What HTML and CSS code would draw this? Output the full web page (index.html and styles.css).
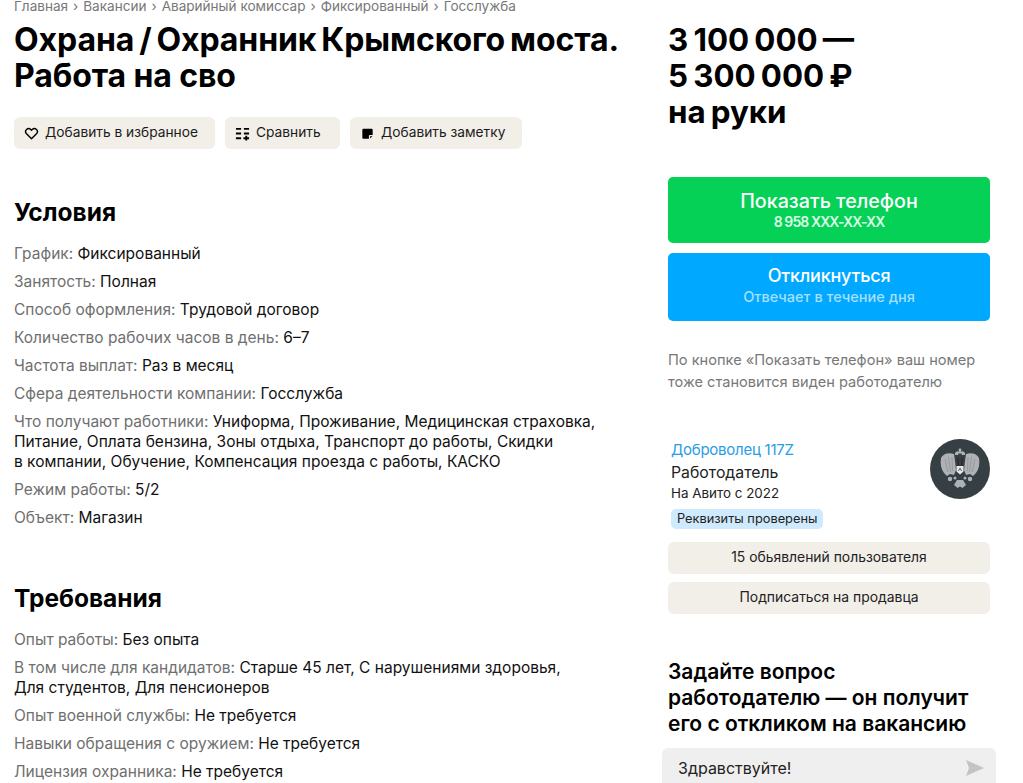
FILE: index.html
```html
<!DOCTYPE html>
<html lang="ru">
<head>
<meta charset="utf-8">
<title>Охрана / Охранник Крымского моста</title>
<link rel="stylesheet" href="styles.css">
</head>
<body>
<div class="page">
  <main class="main">
    <nav class="crumbs">
      <span>Главная</span><i>›</i><span>Вакансии</span><i>›</i><span>Аварийный комиссар</span><i>›</i><span>Фиксированный</span><i>›</i><span>Госслужба</span>
    </nav>
    <h1 class="title">Охрана / Охранник Крымского моста.<br><span class="title-second">Работа на сво</span></h1>
    <div class="actions">
      <button class="chip chip-fav">
        <svg class="ico" viewBox="0 0 16 16"><path d="M8 13.600 2.700 8.300a3.200 3.200 0 0 1 0-4.500 3.200 3.200 0 0 1 4.500 0l.8.8.8-.8a3.200 3.200 0 0 1 4.500 0 3.200 3.200 0 0 1 0 4.500z" fill="none" stroke="#000" stroke-width="1.500" stroke-linejoin="round"/></svg>
        Добавить в избранное
      </button>
      <button class="chip chip-cmp">
        <svg class="ico" viewBox="0 0 16 16"><path d="M1 3h5.500M9.500 3H15M1 8h5.500M9.500 8H15M1 13h5.500M9 13h6M12 10.500v5" fill="none" stroke="#000" stroke-width="2"/></svg>
        Сравнить
      </button>
      <button class="chip chip-note">
        <svg class="ico" viewBox="0 0 16 16"><path d="M3.500 3h9a1 1 0 0 1 1 1v5.500h-3a1 1 0 0 0-1 1v3h-6a1 1 0 0 1-1-1V4a1 1 0 0 1 1-1zM10.800 13.300v-2.500h2.500z" fill="#000"/></svg>
        Добавить заметку
      </button>
    </div>

    <section class="block">
      <h2 class="heading">Условия</h2>
      <ul class="facts">
        <li><span>График:</span> Фиксированный</li>
        <li><span>Занятость:</span> Полная</li>
        <li><span>Способ оформления:</span> Трудовой договор</li>
        <li><span>Количество рабочих часов в день:</span> 6–7</li>
        <li><span>Частота выплат:</span> Раз в месяц</li>
        <li><span>Сфера деятельности компании:</span> Госслужба</li>
        <li><span>Что получают работники:</span> Униформа, Проживание, Медицинская страховка,<br>Питание, Оплата бензина, Зоны отдыха, Транспорт до работы, Скидки<br>в компании, Обучение, Компенсация проезда с работы, КАСКО</li>
        <li><span>Режим работы:</span> 5/2</li>
        <li><span>Объект:</span> Магазин</li>
      </ul>
    </section>

    <section class="block block-req">
      <h2 class="heading">Требования</h2>
      <ul class="facts">
        <li><span>Опыт работы:</span> Без опыта</li>
        <li><span>В том числе для кандидатов:</span> Старше 45 лет, С нарушениями здоровья,<br>Для студентов, Для пенсионеров</li>
        <li><span>Опыт военной службы:</span> Не требуется</li>
        <li><span>Навыки обращения с оружием:</span> Не требуется</li>
        <li><span>Лицензия охранника:</span> Не требуется</li>
      </ul>
    </section>
  </main>

  <aside class="side">
    <div class="price">3 100 000 —<br>5 300 000 ₽<br>на руки</div>
    <a class="cta cta-green"><b>Показать телефон</b><small>8 958 ХХХ-ХХ-ХХ</small></a>
    <a class="cta cta-blue"><b>Откликнуться</b><small>Отвечает в течение дня</small></a>
    <p class="note">По кнопке «Показать телефон» ваш номер<br>тоже становится виден работодателю</p>

    <div class="seller">
      <div class="seller-info">
        <a class="seller-name">Доброволец 117Z</a>
        <div class="seller-role">Работодатель</div>
        <div class="seller-since">На Авито с 2022</div>
        <span class="badge">Реквизиты проверены</span>
      </div>
      <div class="avatar">
        <svg viewBox="0 0 60 60" width="60" height="60">
          <circle cx="30" cy="30" r="30" fill="#363f44"/>
          <g fill="#aeb2b4">
            <path d="M24 15c-6-2-11 0-13 4-1 6 0 11 3 15l3 3 3-2 4 1 2-5-1-9z"/>
            <path d="M36 15c6-2 11 0 13 4 1 6 0 11-3 15l-3 3-3-2-4 1-2-5 1-9z"/>
            <path d="M30 9l1.500 1.500-.5 2 1.500 2h-5l1.500-2-.5-2z"/>
            <path d="M25 14c1.500-2 3-2 4-1l-1 3h-3zM35 14c-1.500-2-3-2-4-1l1 3h3z"/>
            <circle cx="20" cy="40" r="2.200"/><circle cx="40" cy="40" r="2.200"/>
            <circle cx="25" cy="39" r="1.500"/><circle cx="35" cy="39" r="1.500"/>
            <path d="M27 41h6l3 5-3.500 3-2.500-1.500-2.500 1.500-3.500-3z"/>
          </g>
          <path d="M15 20l3 13M18.500 18l2 15M22 18l.5 14M45 20l-3 13M41.500 18l-2 15M38 18l-.5 14" stroke="#83888b" stroke-width=".6" fill="none"/>
          <path d="M27 19h2v8h-2zM31 19h2v8h-2z" fill="#2a3136"/>
          <path d="M26.500 27h7v5.500l-3.500 3-3.500-3z" fill="#e6e8e8"/>
          <path d="M28.500 32l1.500-3 1.500 3" stroke="#4a5257" stroke-width=".9" fill="none"/>
        </svg>
      </div>
    </div>
    <a class="soft">15 обьявлений пользователя</a>
    <a class="soft soft-next">Подписаться на продавца</a>

    <h3 class="ask">Задайте вопрос<br>работодателю — он получит<br>его с откликом на вакансию</h3>
    <div class="input">
      <span>Здравствуйте!</span>
      <svg class="send" viewBox="0 0 18 16" width="18" height="16"><path d="M0 0l18 8L0 16l3-8z" fill="#c4c4c4"/></svg>
    </div>
  </aside>
</div>
</body>
</html>
```

FILE: styles.css
```css
* { box-sizing: border-box; }
html, body { margin: 0; height: 783px; overflow: hidden; background: #fff; }
body { font-family: "Inter", "Noto Sans", sans-serif; color: #000; font-size: 15px; }
.page { display: flex; height: 783px; overflow: hidden; padding-left: 14px; }
.main { width: 654px; flex: none; }
.side { width: 322px; flex: none; padding-top: 22px; }

.crumbs { height: 12px; display: flex; align-items: center; font-size: 13.550px; line-height: 12px; color: #787878; white-space: nowrap; }
.crumbs i { font-style: normal; margin: 0 5px; }

.title { margin: 10px 0 0; font-size: 32px; line-height: 36px; font-weight: 700; letter-spacing: -0.1px; word-spacing: -2.500px; white-space: nowrap; }
.title-second { word-spacing: 0; }

.actions { display: flex; gap: 10px; margin-top: 23px; }
.chip { height: 32px; border: 0; border-radius: 6px; background: #f2efe9; display: flex; align-items: center; gap: 6px; font: inherit; font-size: 13.750px; color: #1c1c1c; padding: 0 10px 2px; white-space: nowrap; }
.ico { width: 15px; height: 15px; flex: none; margin-top: 2px; }
.chip-fav { width: 201px; }
.chip-cmp { width: 115px; }
.chip-note { width: 172px; }

.block { margin-top: 48px; }
.block-req { margin-top: 55px; }
.heading { margin: 0 0 17px; font-size: 24.500px; line-height: 30px; font-weight: 700; }
.facts { list-style: none; margin: 0; padding: 0; font-size: 15.500px; line-height: 20px; color: #111; white-space: nowrap; }
.facts li { margin-bottom: 8px; }
.facts span { color: #6f6f6f; }

.price { font-size: 31.300px; line-height: 36px; font-weight: 700; word-spacing: -2.200px; white-space: nowrap; }
.cta { display: flex; flex-direction: column; align-items: center; justify-content: center; border-radius: 5px; color: #fff; }
.cta b { font-size: 19.700px; line-height: 24px; font-weight: 500; }
.cta small { line-height: 18px; font-weight: 500; }
.cta-green { margin-top: 47px; height: 66px; padding-bottom: 1px; background: #04d155; }
.cta-green small { font-size: 14px; font-weight: 600; letter-spacing: -0.900px; color: #dcfbe8; }
.cta-blue { margin-top: 10px; height: 68px; padding-bottom: 6px; background: #00a8ff; }
.cta-blue b { font-size: 18px; letter-spacing: -0.200px; }
.cta-blue small { font-size: 14.500px; line-height: 17px; color: #a6e0ff; }
.note { margin: 28px 0 0; font-size: 14.600px; line-height: 22px; color: #787878; white-space: nowrap; }

.seller { display: flex; justify-content: space-between; align-items: flex-start; margin-top: 46px; padding-left: 3px; }
.seller-info { display: flex; flex-direction: column; align-items: flex-start; }
.seller-name { font-size: 15px; line-height: 22px; letter-spacing: -0.250px; color: #2b9ce6; }
.seller-role { font-size: 15.800px; line-height: 22px; color: #222; margin-top: 1px; }
.seller-since { font-size: 13.400px; line-height: 19px; color: #222; }
.badge { margin-top: 6px; height: 20px; padding: 0 6px; border-radius: 5px; background: #cfeafd; font-size: 12.800px; line-height: 20px; color: #222; }
.avatar { width: 60px; height: 60px; }
.avatar svg { display: block; }

.soft { display: flex; align-items: center; justify-content: center; height: 32px; margin-top: 13px; padding-bottom: 2px; border-radius: 6px; background: #f2efe9; font-size: 13.900px; color: #222; }
.soft-next { margin-top: 8px; }

.ask { margin: 45px 0 0; font-size: 21px; line-height: 26px; font-weight: 600; white-space: nowrap; }
.input { display: flex; align-items: center; justify-content: space-between; margin: 11px 0 0 -6px; width: 334px; height: 60px; padding: 0 12px 20px 16px; border-radius: 6px; background: #efefef; font-size: 16px; color: #222; }
```
